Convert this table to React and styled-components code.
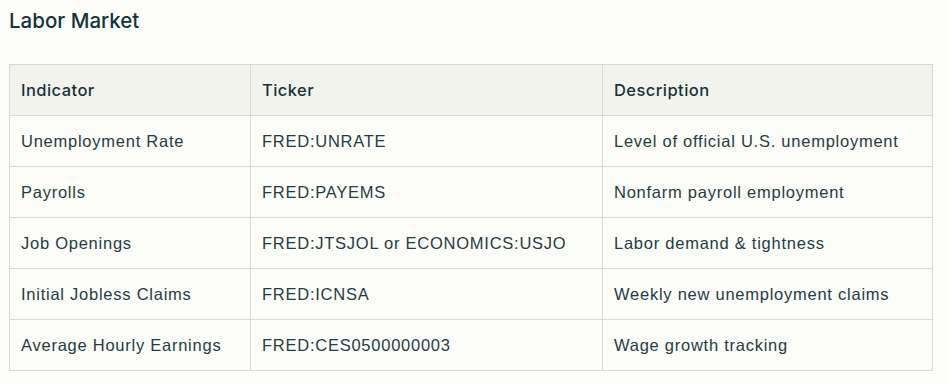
import React from 'react';
import styled, { createGlobalStyle } from 'styled-components';

const GlobalStyle = createGlobalStyle`
  html, body {
    margin:0;
    padding:0;
    background:#fcfcf9;
  }
  body {
    font-family:"Liberation Sans", Arial, sans-serif;
    color:#13343b;
  }
`;

const rows = [
  { indicator: 'Unemployment Rate', ticker: 'FRED:UNRATE', description: 'Level of official U.S. unemployment' },
  { indicator: 'Payrolls', ticker: 'FRED:PAYEMS', description: 'Nonfarm payroll employment' },
  { indicator: 'Job Openings', ticker: 'FRED:JTSJOL or ECONOMICS:USJO', description: 'Labor demand & tightness' },
  { indicator: 'Initial Jobless Claims', ticker: 'FRED:ICNSA', description: 'Weekly new unemployment claims' },
  { indicator: 'Average Hourly Earnings', ticker: 'FRED:CES0500000003', description: 'Wage growth tracking' },
];

const App = () => (
  <>
    <GlobalStyle />
    <Page>
      <Heading>Labor Market</Heading>
      <Table>
        <colgroup>
          <col style={{ width: 241 }} />
          <col style={{ width: 352 }} />
          <col />
        </colgroup>
        <thead>
          <tr>
            <HeadCell>Indicator</HeadCell>
            <HeadCell>Ticker</HeadCell>
            <HeadCell>Description</HeadCell>
          </tr>
        </thead>
        <tbody>
          { rows.map(val =>
            <tr key={val.indicator}>
              <Cell>{val.indicator}</Cell>
              <Cell>{val.ticker}</Cell>
              <Cell>{val.description}</Cell>
            </tr>
          )}
        </tbody>
      </Table>
    </Page>
  </>
);

const Page = styled.div`
  padding:8px 15px 0 9px;
`;

const Heading = styled.h2`
  margin:0;
  font-family:Inter, "Noto Sans", sans-serif;
  font-weight:500;
  font-size:20.5px;
  line-height:26px;
  color:#13343b;
`;

const Table = styled.table`
  margin-top:30px;
  width:924px;
  border-collapse:collapse;
  table-layout:fixed;
  font-size:16.5px;
`;

const HeadCell = styled.th`
  height:50px;
  padding:0 11px;
  text-align:left;
  font-family:Inter, "Liberation Sans", sans-serif;
  font-weight:500;
  letter-spacing:0.45px;
  background:#f3f3ee;
  border:1px solid #d9d9d4;
  color:#13343b;
`;

const Cell = styled.td`
  height:50px;
  padding:0 11px;
  border:1px solid #d9d9d4;
  color:#1f3d43;
  letter-spacing:0.75px;
  white-space:nowrap;
`;

export default App;
